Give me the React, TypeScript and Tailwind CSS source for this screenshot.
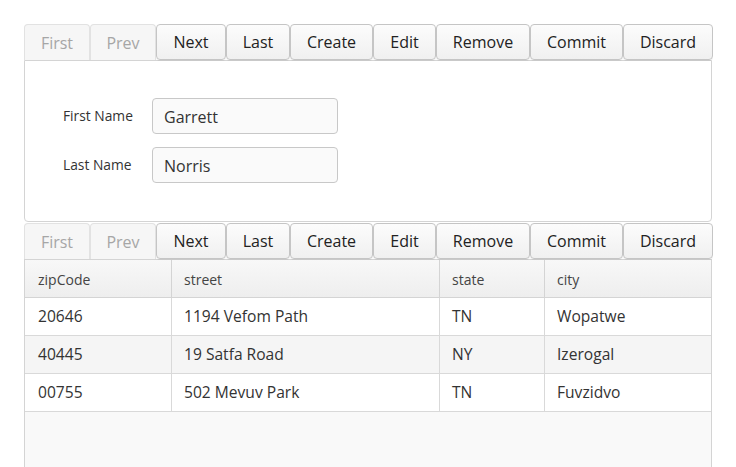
import React from "react"

const buttons = [
  { label: "First", w: "w-[66px]", disabled: true },
  { label: "Prev", w: "w-[66px]", disabled: true },
  { label: "Next", w: "w-[70px]" },
  { label: "Last", w: "w-[64px]" },
  { label: "Create", w: "w-[83px]" },
  { label: "Edit", w: "w-[63px]" },
  { label: "Remove", w: "w-[94px]" },
  { label: "Commit", w: "w-[93px]" },
  { label: "Discard", w: "w-[90px]" },
]

const rows = [
  ["20646", "1194 Vefom Path", "TN", "Wopatwe"],
  ["40445", "19 Satfa Road", "NY", "Izerogal"],
  ["00755", "502 Mevuv Park", "TN", "Fuvzidvo"],
]

function Toolbar() {
  return (
    <div className="flex h-[37px] items-end">
      {buttons.map((b) =>
        b.disabled ? (
          <button
            key={b.label}
            className={`${b.w} h-[36px] shrink-0 rounded-t-[4px] border border-b-0 border-[#e2e2e2] bg-[#f6f6f6] text-[16px] text-[#a6a6a6]`}
          >
            {b.label}
          </button>
        ) : (
          <button
            key={b.label}
            className={`${b.w} h-[36px] shrink-0 rounded-[4px] border border-[#c5c5c5] bg-gradient-to-b from-[#fcfcfc] to-[#f0f0f0] text-[16px] text-[#222] shadow-[0_1px_0_rgba(0,0,0,0.05)]`}
          >
            {b.label}
          </button>
        )
      )}
    </div>
  )
}

export default function App() {
  return (
    <div
      className="min-h-[467px] overflow-hidden bg-white pl-[24px] pt-[23px]"
      style={{ fontFamily: '"Open Sans", sans-serif' }}
    >
      <div className="w-[689px]">
        <Toolbar />
        <div className="h-[162px] w-[688px] rounded-b-[4px] border border-[#d4d4d4] bg-white pt-[37px]">
          <div className="flex flex-col gap-[13px]">
            <div className="flex items-center">
              <label className="w-[127px] pl-[38px] pt-[1px] text-[13.8px] text-[#333]">First Name</label>
              <div className="flex h-[36px] w-[186px] items-center rounded-[4px] border border-[#c8c8c8] bg-[#fafafa] pl-[11px] pt-[1px] text-[16px] text-[#333]">
                Garrett
              </div>
            </div>
            <div className="flex items-center">
              <label className="w-[127px] pl-[38px] pt-[1px] text-[13.8px] text-[#333]">Last Name</label>
              <div className="flex h-[36px] w-[186px] items-center rounded-[4px] border border-[#c8c8c8] bg-[#fafafa] pl-[11px] pt-[1px] text-[16px] text-[#333]">
                Norris
              </div>
            </div>
          </div>
        </div>
        <Toolbar />
        <div className="h-[210px] w-[688px] border border-[#d4d4d4] bg-[#f9f9f9]">
          <div className="grid h-[38px] grid-cols-[146px_268px_105px_1fr] border-b border-[#d4d4d4] bg-gradient-to-b from-[#f8f8f8] to-[#eeeeee] text-[14px] text-[#444]">
            {["zipCode", "street", "state", "city"].map((h, i) => (
              <div
                key={h}
                className={`flex items-center pt-[1px] ${i > 0 ? "border-l border-[#d4d4d4] pl-[12px]" : "pl-[13px]"}`}
              >
                {h}
              </div>
            ))}
          </div>
          {rows.map((r, ri) => (
            <div
              key={ri}
              className={`grid h-[38px] grid-cols-[146px_268px_105px_1fr] border-b border-[#d9d9d9] text-[15.6px] text-[#333] ${ri % 2 === 1 ? "bg-[#f5f5f5]" : "bg-white"}`}
            >
              {r.map((c, i) => (
                <div
                  key={i}
                  className={`flex items-center ${i > 0 ? "border-l border-[#d9d9d9] pl-[12px]" : "pl-[13px]"}`}
                >
                  {c}
                </div>
              ))}
            </div>
          ))}
        </div>
      </div>
    </div>
  )
}
